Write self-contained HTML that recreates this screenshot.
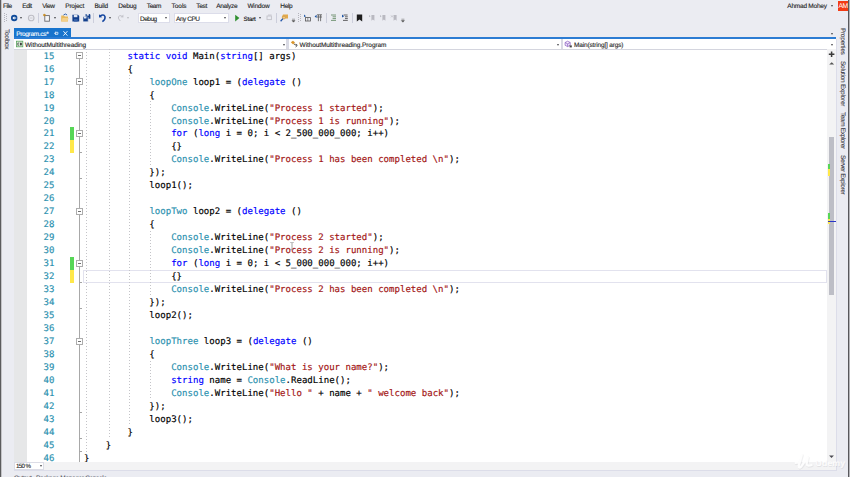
<!DOCTYPE html>
<html lang="en">
<head>
<meta charset="utf-8">
<title>WithoutMultithreading - Microsoft Visual Studio</title>
<style>
*{box-sizing:border-box;margin:0;padding:0}
html,body{width:850px;height:477px;overflow:hidden}
body{position:relative;background:#ebecf2;font-family:"Liberation Sans",sans-serif;color:#1e1e1e;text-rendering:geometricPrecision}
.abs{position:absolute}
.ui{position:absolute;font-size:6.5px;line-height:10px;white-space:nowrap;color:#1e1e1e;-webkit-text-stroke:0.12px currentColor}
.menu{top:2.1px}
.vt{position:absolute;font-size:6.5px;line-height:10px;white-space:nowrap;color:#3b3b45;-webkit-text-stroke:0.1px currentColor;transform-origin:0 0;transform:rotate(90deg)}
#editor{position:absolute;left:14px;top:49px;width:822px;height:413px;background:#fff;overflow:hidden}
.ln,.cl{position:absolute;font-family:"DejaVu Sans Mono","Liberation Mono",monospace;font-size:9.05px;line-height:13px;height:13px;white-space:pre;margin-top:1.7px;-webkit-text-stroke:0.16px currentColor}
.ln{left:43.5px;color:#2b91af}
.cl{left:84px;color:#000}
.k{color:#0000ff}.t{color:#2b91af}.s{color:#a31515}
.guide{position:absolute;width:1px;background:repeating-linear-gradient(to bottom,#c4c4c8 0,#c4c4c8 1.1px,transparent 1.1px,transparent 3px)}
.obox{position:absolute;left:76px;width:7px;height:7px;border:1px solid #adadad;background:#fff}
.obox:after{content:"";position:absolute;left:1px;top:2px;width:3px;height:1px;background:#707070}
.tick{position:absolute;left:79px;width:3px;height:1px;background:#a5a5a5}
.sep{position:absolute;top:13px;width:1px;height:10px;background:#cccedb}
.dd{position:absolute;width:0;height:0;border-left:1.75px solid transparent;border-right:1.75px solid transparent;border-top:2.1px solid #48484e;margin-left:-0.25px}
.combo{position:absolute;background:#fff;border:1px solid #dcddea}
</style>
</head>
<body>
<!-- window edges -->
<div class="abs" style="left:0;top:0;width:1px;height:477px;background:#5c5c5e"></div>
<div class="abs" style="left:1px;top:0;width:1px;height:477px;background:#c4c4c8"></div>
<div class="abs" style="left:848px;top:0;width:1px;height:477px;background:#58585c"></div>
<div class="abs" style="left:849px;top:0;width:1px;height:477px;background:#b4b4b8"></div>

<!-- menu bar -->
<div class="ui menu" style="left:3px;letter-spacing:-0.491px">File</div>
<div class="ui menu" style="left:22.3px;letter-spacing:-0.500px">Edit</div>
<div class="ui menu" style="left:42.3px;letter-spacing:-0.424px">View</div>
<div class="ui menu" style="left:65.3px;letter-spacing:-0.222px">Project</div>
<div class="ui menu" style="left:94.4px;letter-spacing:-0.213px">Build</div>
<div class="ui menu" style="left:118.3px;letter-spacing:-0.213px">Debug</div>
<div class="ui menu" style="left:146.8px;letter-spacing:-0.398px">Team</div>
<div class="ui menu" style="left:171.6px;letter-spacing:-0.043px">Tools</div>
<div class="ui menu" style="left:196.2px;letter-spacing:-0.273px">Test</div>
<div class="ui menu" style="left:216.3px;letter-spacing:-0.321px">Analyze</div>
<div class="ui menu" style="left:247.4px;letter-spacing:-0.164px">Window</div>
<div class="ui menu" style="left:280.3px;letter-spacing:-0.323px">Help</div>
<div class="ui menu" style="left:787.3px;letter-spacing:-0.221px">Ahmad Mohey</div>
<div class="dd" style="left:831.3px;top:5px"></div>
<div class="abs" style="left:838.4px;top:0.6px;width:9.7px;height:10.1px;background:#f23b14;color:#fff;font-size:6.9px;letter-spacing:-0.75px;line-height:12px;text-align:center;text-indent:-0.5px;overflow:hidden">AM</div>

<!-- toolbar -->
<svg class="abs" style="left:0;top:10px" width="420" height="16" viewBox="0 10 420 16">
  <!-- grip -->
  <g fill="#b4b4bc"><rect x="4" y="13" width="1" height="1"/><rect x="6" y="14" width="1" height="1"/><rect x="4" y="15" width="1" height="1"/><rect x="6" y="16" width="1" height="1"/><rect x="4" y="17" width="1" height="1"/><rect x="6" y="18" width="1" height="1"/><rect x="4" y="19" width="1" height="1"/><rect x="6" y="20" width="1" height="1"/><rect x="4" y="21" width="1" height="1"/></g>
  <!-- back -->
  <circle cx="14.2" cy="18" r="3.2" fill="#0e4a9a"/>
  <path d="M12.4 18 L14.4 16.2 L14.4 17.4 L16.2 17.4 L16.2 18.6 L14.4 18.6 L14.4 19.8 Z" fill="#fff"/>
  <!-- fwd -->
  <circle cx="31.2" cy="18" r="2.8" fill="none" stroke="#bdbdc4" stroke-width="1.1"/>
  <path d="M29.8 18 H32.6" stroke="#c8c8ce" stroke-width="0.9"/>
  <!-- new project -->
  <rect x="44.8" y="15.6" width="4.6" height="5.6" fill="#f6f6f8" stroke="#6a6a6e" stroke-width="0.9"/>
  <path d="M43.5 14.2 l1.8 1.8 M45.3 14.2 l-1.8 1.8 M44.4 13.8 v2.6 M43.1 15.1 h2.6" stroke="#c98a1c" stroke-width="0.8"/>
  <!-- open -->
  <path d="M61.2 21.5 V15.6 H64 L64.8 16.6 H68 V21.5 Z" fill="#e8b95c"/>
  <path d="M61.2 21.5 L62.6 18 H68.6 L67.4 21.5 Z" fill="#f3d08b"/>
  <path d="M63.5 15 q2 -2 3.6 0" stroke="#1c55a6" stroke-width="0.9" fill="none"/>
  <!-- save -->
  <path d="M72.4 14.8 H78 L79.2 16 V21.6 H72.4 Z" fill="#123f8c"/>
  <rect x="73.8" y="14.8" width="3.6" height="2.4" fill="#dfe6f3"/>
  <rect x="74" y="19" width="3.6" height="2.6" fill="#3560a8"/>
  <!-- save all -->
  <path d="M85.6 14 H89.6 L90.4 14.8 V18.8 H85.6 Z" fill="#123f8c"/>
  <path d="M83 16.8 H87.4 L88.2 17.6 V21.8 H83 Z" fill="#123f8c" stroke="#ebecf2" stroke-width="0.6"/>
  <rect x="86.6" y="14" width="2.2" height="1.6" fill="#dfe6f3"/>
  <rect x="84" y="16.9" width="2.4" height="1.6" fill="#dfe6f3"/>
  <!-- undo -->
  <path d="M100.2 16 Q103.6 13.8 105 16.6 Q105.6 19.4 102.4 21.6" stroke="#1647a0" stroke-width="1.5" fill="none"/>
  <path d="M99 14.2 L99 17.6 L102.2 17.2 Z" fill="#1647a0"/>
  <!-- redo -->
  <path d="M122.4 16.4 Q119.6 14.4 118.4 16.8 Q118 19 120.4 21" stroke="#c3c3ca" stroke-width="1" fill="none"/>
  <path d="M123.4 14.6 L123.4 17.6 L120.6 17.2 Z" fill="#c3c3ca"/>
  <!-- play -->
  <path d="M235.2 14.8 L239.4 18.1 L235.2 21.4 Z" fill="#2f8f2f"/>
  <!-- gray icon -->
  <rect x="267" y="16" width="4.4" height="3.6" fill="none" stroke="#c2c2c9" stroke-width="0.9"/>
  <path d="M268 15 h3.6" stroke="#c2c2c9" stroke-width="0.8"/>
  <!-- find in files -->
  <path d="M281.6 17.2 L283 14.4 H288 L288 18.6 H283.4 Z" fill="#e2a94d"/>
  <path d="M280.6 21.2 L283.2 18.4" stroke="#2457a8" stroke-width="1.3"/>
  <circle cx="284" cy="17.6" r="1.4" fill="#f0c886" stroke="#c4903a" stroke-width="0.5"/>
  <!-- grip2 -->
  <g fill="#b4b4bc"><rect x="298" y="13" width="1" height="1"/><rect x="300" y="14" width="1" height="1"/><rect x="298" y="15" width="1" height="1"/><rect x="300" y="16" width="1" height="1"/><rect x="298" y="17" width="1" height="1"/><rect x="300" y="18" width="1" height="1"/><rect x="298" y="19" width="1" height="1"/><rect x="300" y="20" width="1" height="1"/><rect x="298" y="21" width="1" height="1"/></g>
  <!-- icons group -->
  <path d="M304 14.4 l2 1.8 l-2 0.8 Z" fill="#1c55a6"/>
  <rect x="305.4" y="17.6" width="5" height="3.4" fill="none" stroke="#555" stroke-width="0.8"/>
  <path d="M307.8 17.6 v3.4" stroke="#555" stroke-width="0.6"/>
  <path d="M314.6 16.4 l2 -1.6 v3.2 Z" fill="#1c55a6"/>
  <path d="M317 14.8 h5 M318.4 14.8 v6.4 M320.6 14.8 v6.4 M317 17 h5" stroke="#555" stroke-width="0.8" fill="none"/>
  <path d="M331 15 h5 M332.6 16.8 h3.4 M332.6 18.6 h3.4 M331 20.4 h5" stroke="#6b8f6b" stroke-width="0.9"/>
  <path d="M342 14.6 l2.2 1.6 l-2.2 1.2 Z" fill="#1c55a6"/>
  <path d="M343.6 15 h4 M345 16.8 h2.8 M345 18.6 h2.8 M343 20.4 h4.8" stroke="#555" stroke-width="0.9"/>
  <!-- bookmark -->
  <path d="M356.8 14.4 H362.2 V21.4 L359.5 19.4 L356.8 21.4 Z" fill="#1e1e1e"/>
  <!-- gray bookmarks -->
  <g fill="#b9b9c1"><path d="M371.4 15 h3 v5.8 l-1.5 -1.2 l-1.5 1.2 Z"/><path d="M369 15 l1.6 1.2 l-1.6 1 Z"/>
  <path d="M382.4 15 h3 v5.8 l-1.5 -1.2 l-1.5 1.2 Z"/><path d="M380 15 l1.6 1.2 l-1.6 1 Z"/>
  <path d="M393.6 15 h3 v5.8 l-1.5 -1.2 l-1.5 1.2 Z"/><path d="M391 15.4 l2 2 M393 15.4 l-2 2" stroke="#b9b9c1" stroke-width="0.7"/></g>
  <!-- overflow arrows -->
  <path d="M292 19.2 h3 M292 20.6 h3 l-1.5 1.6 Z" fill="#555" stroke="#555" stroke-width="0.5"/>
  <path d="M401.4 19.2 h3 M401.4 20.6 h3 l-1.5 1.6 Z" fill="#555" stroke="#555" stroke-width="0.5"/>
</svg>
<div class="dd" style="left:20.7px;top:17.2px"></div>
<div class="sep" style="left:38px"></div>
<div class="dd" style="left:54.2px;top:17.2px"></div>
<div class="sep" style="left:93px"></div>
<div class="dd" style="left:109.7px;top:17.2px"></div>
<div class="dd" style="left:127.7px;top:17.2px;border-top-color:#b9b9c0"></div>
<div class="combo" style="left:137.7px;top:12.7px;width:32.5px;height:10.5px"></div>
<div class="ui" style="left:140px;top:14.5px;letter-spacing:-0.513px">Debug</div>
<div class="dd" style="left:165.6px;top:17.2px"></div>
<div class="combo" style="left:173.8px;top:12.7px;width:55.7px;height:10.5px"></div>
<div class="ui" style="left:176px;top:14.5px;letter-spacing:-0.455px">Any CPU</div>
<div class="dd" style="left:224.6px;top:17.2px"></div>
<div class="ui" style="left:243.6px;top:14.5px;color:#111;font-size:6.2px;letter-spacing:-0.223px">Start</div>
<div class="dd" style="left:259px;top:17.2px"></div>
<div class="sep" style="left:276px"></div>
<div class="sep" style="left:325.5px"></div>
<div class="sep" style="left:352px"></div>

<!-- toolbox side -->
<div class="vt" style="left:10.6px;top:28.8px;letter-spacing:-0.317px">Toolbox</div>

<!-- tab -->
<div class="abs" style="left:14px;top:28px;width:56.5px;height:10.5px;background:#1874cd"></div>
<div class="ui" style="left:16.2px;top:29.8px;color:#fff;letter-spacing:-0.326px">Program.cs*</div>
<svg class="abs" style="left:53px;top:29px" width="18" height="9" viewBox="53 29 18 9">
  <path d="M54 33.3 h1.6 M55.6 31.7 v3.2 M55.6 32.3 h2.3 v2 h-2.3" stroke="#fff" stroke-width="0.7" fill="none"/>
  <path d="M63.4 31.2 l4 4.4 M67.4 31.2 l-4 4.4" stroke="#fff" stroke-width="0.9"/>
</svg>
<div class="abs" style="left:14px;top:36.9px;width:822px;height:2px;background:#2c7cd3"></div>
<div class="dd" style="left:831.3px;top:33px"></div>

<!-- nav bar -->
<div class="abs" style="left:14px;top:39px;width:822px;height:10px;background:#fff"></div>
<div class="abs" style="left:14px;top:48.8px;width:822px;height:1.2px;background:#cbccd8"></div>
<div class="abs" style="left:286.2px;top:39.2px;width:2.4px;height:9.8px;background:#d9dae4"></div>
<div class="abs" style="left:560.8px;top:39.2px;width:2.2px;height:9.8px;background:#d9dae4"></div>
<svg class="abs" style="left:14px;top:39px" width="822" height="10" viewBox="14 39 822 10">
  <rect x="16.4" y="41.2" width="6.4" height="5.6" fill="#dcecdc" stroke="#5aa35f" stroke-width="0.8"/>
  <path d="M19.2 43 h-1.4 v2.2 h1.4 M20 43.4 h1.8 M20 44.6 h1.8 M20.5 42.8 v2.6 M21.3 42.8 v2.6" stroke="#222" stroke-width="0.6" fill="none"/>
  <path d="M290.8 42.2 l2.2 -1.4 l2 1.8 l-1.8 2 Z" fill="#d9962b"/>
  <path d="M294 44 l2.6 1.6 M295.8 44.2 l1.6 1 M295.6 47 l1.6 -1.4" stroke="#444" stroke-width="0.9"/>
  <path d="M567.6 41.2 l2.6 1.3 v2.8 l-2.6 1.3 l-2.5 -1.3 v-2.8 Z M565.1 42.5 l2.5 1.3 l2.6 -1.3 M567.6 43.8 v2.8" fill="#efe6fa" stroke="#8a5cc2" stroke-width="0.7"/>
  <rect x="569.6" y="45.4" width="2.2" height="2" fill="#444"/>
</svg>
<div class="ui" style="left:25px;top:41px;font-size:6.5px;letter-spacing:-0.083px">WithoutMultithreading</div>
<div class="ui" style="left:299.6px;top:41px;font-size:6.5px;letter-spacing:-0.100px">WithoutMultithreading.Program</div>
<div class="ui" style="left:574px;top:41px;font-size:6.5px;letter-spacing:-0.159px">Main(string[] args)</div>
<div class="dd" style="left:283.3px;top:43.6px"></div>
<div class="dd" style="left:556.8px;top:43.6px"></div>
<div class="dd" style="left:831.3px;top:43.6px"></div>

<!-- editor -->
<div id="editor">
<div style="position:absolute;left:-14px;top:-49px;width:850px;height:477px">
<div class="abs" style="left:14px;top:49px;width:13px;height:413px;background:#e6e7e8"></div>
<div class="abs" style="left:14px;top:49px;width:822px;height:1px;background:#d4d5de"></div>
<!-- current line -->
<div class="abs" style="left:82.5px;top:270.1px;width:744.2px;height:12.8px;border:1.2px solid #e2e2ee"></div>
<!-- change bars -->
<div class="abs" style="left:69.6px;top:127px;width:4.2px;height:13px;background:#57d657"></div>
<div class="abs" style="left:69.6px;top:140px;width:4.2px;height:13px;background:#ffe84a"></div>
<div class="abs" style="left:69.6px;top:257px;width:4.2px;height:13px;background:#57d657"></div>
<div class="abs" style="left:69.6px;top:270px;width:4.2px;height:13px;background:#ffe84a"></div>
<!-- outlining -->
<div class="abs" style="left:79px;top:56px;width:1px;height:406px;background:#a8a8a8"></div>
<div class="obox" style="top:52px"></div>
<div class="obox" style="top:78px"></div>
<div class="obox" style="top:130px"></div>
<div class="obox" style="top:208px"></div>
<div class="obox" style="top:260px"></div>
<div class="obox" style="top:338px"></div>
<div class="tick" style="top:152px"></div>
<div class="tick" style="top:178px"></div>
<div class="tick" style="top:282px"></div>
<div class="tick" style="top:308px"></div>
<div class="tick" style="top:412px"></div>
<div class="tick" style="top:438px"></div>
<div class="tick" style="top:451px"></div>
<!-- indent guides -->
<div class="guide" style="left:85.6px;top:49px;height:403px"></div>
<div class="guide" style="left:108.5px;top:49px;height:390px"></div>
<div class="guide" style="left:128.8px;top:75px;height:351px"></div>
<div class="guide" style="left:150.4px;top:101px;height:65px"></div>
<div class="guide" style="left:150.4px;top:231px;height:65px"></div>
<div class="guide" style="left:150.4px;top:361px;height:39px"></div>
<div class="ln" style="top:49.0px">15</div>
<div class="cl" style="top:49.0px">        <span class="k">static</span> <span class="k">void</span> Main(<span class="k">string</span>[] args)</div>
<div class="ln" style="top:61.97px">16</div>
<div class="cl" style="top:61.97px">        {</div>
<div class="ln" style="top:74.94px">17</div>
<div class="cl" style="top:74.94px">            <span class="t">loopOne</span> loop1 = (<span class="k">delegate</span> ()</div>
<div class="ln" style="top:87.9px">18</div>
<div class="cl" style="top:87.9px">            {</div>
<div class="ln" style="top:100.87px">19</div>
<div class="cl" style="top:100.87px">                <span class="t">Console</span>.WriteLine(<span class="s">"Process 1 started"</span>);</div>
<div class="ln" style="top:113.84px">20</div>
<div class="cl" style="top:113.84px">                <span class="t">Console</span>.WriteLine(<span class="s">"Process 1 is running"</span>);</div>
<div class="ln" style="top:126.81px">21</div>
<div class="cl" style="top:126.81px">                <span class="k">for</span> (<span class="k">long</span> i = 0; i &lt; 2_500_000_000; i++)</div>
<div class="ln" style="top:139.78px">22</div>
<div class="cl" style="top:139.78px">                {}</div>
<div class="ln" style="top:152.74px">23</div>
<div class="cl" style="top:152.74px">                <span class="t">Console</span>.WriteLine(<span class="s">"Process 1 has been completed \n"</span>);</div>
<div class="ln" style="top:165.71px">24</div>
<div class="cl" style="top:165.71px">            });</div>
<div class="ln" style="top:178.68px">25</div>
<div class="cl" style="top:178.68px">            loop1();</div>
<div class="ln" style="top:191.65px">26</div>
<div class="ln" style="top:204.62px">27</div>
<div class="cl" style="top:204.62px">            <span class="t">loopTwo</span> loop2 = (<span class="k">delegate</span> ()</div>
<div class="ln" style="top:217.58px">28</div>
<div class="cl" style="top:217.58px">            {</div>
<div class="ln" style="top:230.55px">29</div>
<div class="cl" style="top:230.55px">                <span class="t">Console</span>.WriteLine(<span class="s">"Process 2 started"</span>);</div>
<div class="ln" style="top:243.52px">30</div>
<div class="cl" style="top:243.52px">                <span class="t">Console</span>.WriteLine(<span class="s">"Process 2 is running"</span>);</div>
<div class="ln" style="top:256.49px">31</div>
<div class="cl" style="top:256.49px">                <span class="k">for</span> (<span class="k">long</span> i = 0; i &lt; 5_000_000_000; i++)</div>
<div class="ln" style="top:269.46px">32</div>
<div class="cl" style="top:269.46px">                {}</div>
<div class="ln" style="top:282.42px">33</div>
<div class="cl" style="top:282.42px">                <span class="t">Console</span>.WriteLine(<span class="s">"Process 2 has been completed \n"</span>);</div>
<div class="ln" style="top:295.39px">34</div>
<div class="cl" style="top:295.39px">            });</div>
<div class="ln" style="top:308.36px">35</div>
<div class="cl" style="top:308.36px">            loop2();</div>
<div class="ln" style="top:321.33px">36</div>
<div class="ln" style="top:334.3px">37</div>
<div class="cl" style="top:334.3px">            <span class="t">loopThree</span> loop3 = (<span class="k">delegate</span> ()</div>
<div class="ln" style="top:347.26px">38</div>
<div class="cl" style="top:347.26px">            {</div>
<div class="ln" style="top:360.23px">39</div>
<div class="cl" style="top:360.23px">                <span class="t">Console</span>.WriteLine(<span class="s">"What is your name?"</span>);</div>
<div class="ln" style="top:373.2px">40</div>
<div class="cl" style="top:373.2px">                <span class="k">string</span> name = <span class="t">Console</span>.ReadLine();</div>
<div class="ln" style="top:386.17px">41</div>
<div class="cl" style="top:386.17px">                <span class="t">Console</span>.WriteLine(<span class="s">"Hello "</span> + name + <span class="s">" welcome back"</span>);</div>
<div class="ln" style="top:399.14px">42</div>
<div class="cl" style="top:399.14px">            });</div>
<div class="ln" style="top:412.1px">43</div>
<div class="cl" style="top:412.1px">            loop3();</div>
<div class="ln" style="top:425.07px">44</div>
<div class="cl" style="top:425.07px">        }</div>
<div class="ln" style="top:438.04px">45</div>
<div class="cl" style="top:438.04px">    }</div>
<div class="ln" style="top:451.01px">46</div>
<div class="cl" style="top:451.01px">}</div>
<!-- I-beam cursor -->
<svg class="abs" style="left:289px;top:242.4px" width="6" height="9" viewBox="0 0 6 9"><path d="M1.4 0.5 H2.6 M3.4 0.5 H4.6 M3 0.5 V7.5 M1.4 7.5 H2.6 M3.4 7.5 H4.6" stroke="#8e8e8e" stroke-width="0.8" fill="none"/></svg>
<!-- vertical scrollbar -->
<div class="abs" style="left:827.2px;top:49px;width:8.8px;height:413px;background:#f3f3f4"></div>
<div class="abs" style="left:829.3px;top:136.8px;width:4.7px;height:158px;background:#bdbec6"></div>
<div class="abs" style="left:827.5px;top:164px;width:2.4px;height:5px;background:#57d657"></div>
<div class="abs" style="left:827.5px;top:169px;width:2.4px;height:7px;background:#ffe84a"></div>
<div class="abs" style="left:827.5px;top:213px;width:2.4px;height:5.5px;background:#57d657"></div>
<div class="abs" style="left:827.5px;top:218.5px;width:2.4px;height:5.5px;background:#ffe84a"></div>
<div class="abs" style="left:827.5px;top:220.8px;width:8.5px;height:1.2px;background:#2a35c8"></div>
<svg class="abs" style="left:827px;top:49px" width="10" height="20" viewBox="827 49 10 20">
  <path d="M828.8 54.3 h5.6 M831.6 51.5 v5.6" stroke="#3a3a3a" stroke-width="1.5"/>
  <path d="M829.2 64.6 l2.5 -2.4 l2.5 2.4 Z" fill="#555"/>
</svg>
<svg class="abs" style="left:827px;top:452px" width="10" height="8" viewBox="827 452 10 8"><path d="M829.1 455.6 h4.8 l-2.4 2.5 Z" fill="#4a4a50"/></svg>
</div>
</div>

<div class="abs" style="left:835.6px;top:39px;width:1.2px;height:431px;background:#dcdde9"></div>
<!-- bottom strip -->
<div class="abs" style="left:14px;top:461.5px;width:822.8px;height:9.2px;background:#f3f3f4;border-right:1.2px solid #dcdde9;border-bottom:1px solid #dcdde9"></div>
<div class="abs" style="left:14px;top:461.8px;width:30.2px;height:8.4px;background:#fff;border:1px solid #dcdde6"></div>
<div class="ui" style="left:16px;top:461.9px;font-size:6.2px;letter-spacing:-0.645px">150 %</div>
<div class="dd" style="left:39.8px;top:465.4px"></div>
<div class="ui" style="left:14px;top:473.6px;color:#55555e;letter-spacing:-0.333px">Output&nbsp;&nbsp;&nbsp;Package Manager Console</div>

<!-- right side tabs -->
<div class="vt" style="left:847.2px;top:28px;letter-spacing:-0.314px">Properties</div>
<div class="vt" style="left:847.2px;top:60.8px;letter-spacing:-0.256px">Solution Explorer</div>
<div class="vt" style="left:847.2px;top:112.4px;letter-spacing:-0.392px">Team Explorer</div>
<div class="vt" style="left:847.2px;top:155.3px;letter-spacing:-0.389px">Server Explorer</div>

<!-- watermark -->
<svg class="abs" style="left:790px;top:448px" width="58" height="26" viewBox="790 448 58 26">
  <g fill="none" stroke-linecap="round" stroke-linejoin="round">
    <path d="M795.6 463 L798 462.4 M801.8 454.8 L798.8 465.6 Q798.6 469 801.2 466.6 L807.8 457.2 L806.6 463.6 Q806.4 466.6 811.6 465" stroke="#8a8a96" stroke-width="2.9" opacity="0.13" transform="translate(0.5 0.7)"/>
    <path d="M795.6 463 L798 462.4 M801.8 454.8 L798.8 465.6 Q798.6 469 801.2 466.6 L807.8 457.2 L806.6 463.6 Q806.4 466.6 811.6 465" stroke="#fff" stroke-width="2.3" opacity="0.9"/>
  </g>
  <text x="816.1" y="466.7" font-family="Liberation Sans, sans-serif" font-weight="bold" font-size="8.6" fill="#8a8a96" opacity="0.16" textLength="29.6" lengthAdjust="spacingAndGlyphs">Udemy</text>
  <text x="815.6" y="466" font-family="Liberation Sans, sans-serif" font-weight="bold" font-size="8.6" fill="#fff" opacity="0.88" textLength="29.6" lengthAdjust="spacingAndGlyphs">Udemy</text>
</svg>
</body>
</html>
